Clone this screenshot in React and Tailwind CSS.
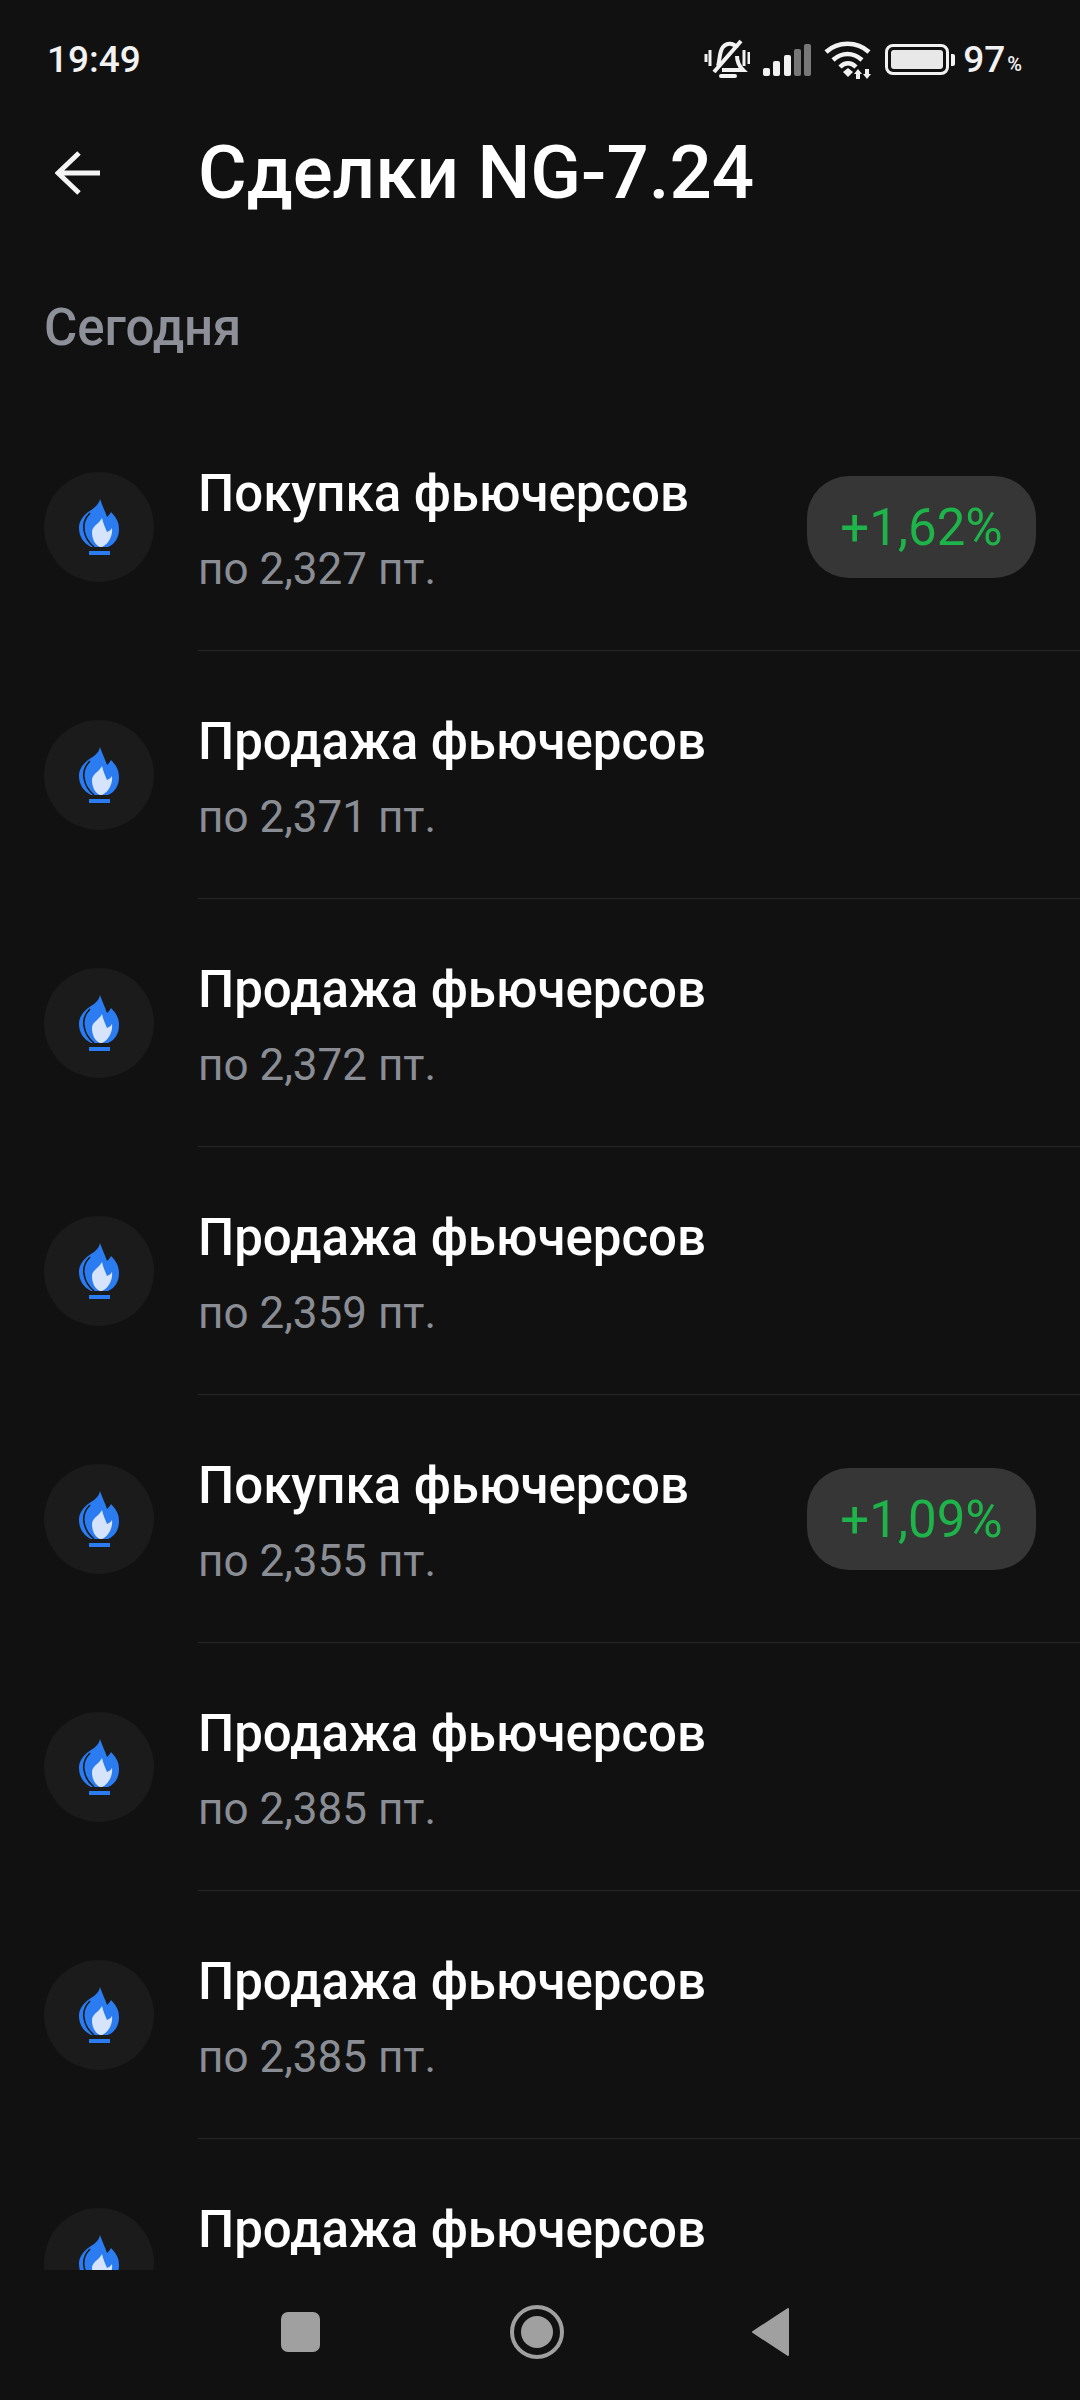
const trades = [
  { id: 1, title: "Покупка фьючерсов", price: "по 2,327 пт.", profit: "+1,62%" },
  { id: 2, title: "Продажа фьючерсов", price: "по 2,371 пт." },
  { id: 3, title: "Продажа фьючерсов", price: "по 2,372 пт." },
  { id: 4, title: "Продажа фьючерсов", price: "по 2,359 пт." },
  { id: 5, title: "Покупка фьючерсов", price: "по 2,355 пт.", profit: "+1,09%" },
  { id: 6, title: "Продажа фьючерсов", price: "по 2,385 пт." },
  { id: 7, title: "Продажа фьючерсов", price: "по 2,385 пт." },
  { id: 8, title: "Продажа фьючерсов", price: "по 2,385 пт." },
];

function GasIcon() {
  return (
    <svg width="110" height="110" viewBox="0 0 110 110">
      <path
        d="M56 27C58 33 61 39 63 45C65 43 66 42 67 40C72 45 75 50 75 57C75 66 71 72 64 75L47 75C39 71 35 64 35 56C35 49 39 44 44 40C49 37 55 33 56 27Z"
        fill="#2a7cf0"
      />
      <path d="M46 41C41 46 39 52 40 58C41 65 45 71 50 75" fill="none" stroke="#1b1b1c" strokeWidth="1.6" />
      <path
        d="M58 46C59 51 61 55 63 60C65 59 67 58 68 56C69 63 65 72 58 75L56 75C51 73 48 67 48 60C48 54 55 52 58 46Z"
        fill="#d6e4fb"
      />
      <path d="M45 79H66V83H45Z" fill="#2a7cf0" />
    </svg>
  );
}

function StatusIcons() {
  return (
    <div className="flex items-center">
      <svg width="46" height="44" viewBox="0 0 46 44" fill="none" stroke="#f2f2f2">
        <path d="M2 16V24M45 14V26M6 12V28M40 12V28" strokeWidth="3" />
        <path d="M14 28C16 22 15 14 19 9C23 4 30 5 33 10" strokeWidth="4" />
        <path d="M33 18C33 24 35 28 39 32H18" strokeWidth="4" />
        <path d="M10 34L37 3" strokeWidth="4" />
        <path d="M17 38H31" strokeWidth="4" strokeLinecap="round" />
      </svg>
      <svg className="ml-[13px]" width="49" height="32" viewBox="0 0 49 32">
        <rect x="0" y="24" width="7" height="8" rx="2" fill="#f2f2f2" />
        <rect x="10" y="17" width="7" height="15" rx="2" fill="#f2f2f2" />
        <rect x="21" y="11" width="7" height="21" rx="2" fill="#f2f2f2" />
        <rect x="31" y="5" width="7" height="27" rx="2" fill="#777777" />
        <rect x="41" y="0" width="7" height="32" rx="2" fill="#777777" />
      </svg>
      <svg className="ml-[12px]" width="48" height="38" viewBox="0 0 48 38" fill="none" stroke="#f2f2f2">
        <path d="M2 11C14 0 33 0 45 11" strokeWidth="4.5" />
        <path d="M9 19C18 11 29 11 38 19" strokeWidth="4.5" />
        <path d="M16 26C21 21 27 21 32 26" strokeWidth="4.5" />
        <path d="M19 31L24 27L29 31L24 36Z" fill="#f2f2f2" stroke="none" />
        <path d="M30 33L34 28L38 33H36V38H32V33Z" fill="#f2f2f2" stroke="none" />
        <path d="M39 33H41V28H45V33H47L43 38Z" fill="#f2f2f2" stroke="none" />
      </svg>
      <div className="ml-[13px] flex items-center">
        <div className="flex h-[31px] w-[64px] items-center rounded-[8px] border-[3px] border-[#f2f2f2] p-[3px]">
          <div className="h-full w-full rounded-[3px] bg-[#e8e8e8]" />
        </div>
        <div className="ml-[2px] h-[12px] w-[4px] rounded-r-[2px] bg-[#f2f2f2]" />
      </div>
      <span className="ml-[8px] text-[37px] leading-none font-medium text-[#f2f2f2]">97</span>
      <span className="ml-[2px] mt-[8px] text-[20px] leading-none font-medium text-[#f2f2f2]">%</span>
    </div>
  );
}

function TradeRow({ trade }) {
  return (
    <div className="flex h-[248px] shrink-0 pl-[44px]">
      <div className="flex h-full items-center">
        <div className="flex h-[110px] w-[110px] rounded-full bg-[#1b1b1c]">
          <GasIcon />
        </div>
      </div>
      <div className="ml-[44px] flex flex-1 items-center border-b border-[#262627] pr-[44px]">
        <div className="flex-1 pt-[8px]">
          <div className="text-[51px] leading-[64px] font-medium text-white">{trade.title}</div>
          <div className="mt-[13px] text-[44px] leading-[60px] text-[#8a8d94]">{trade.price}</div>
        </div>
        {trade.profit && (
          <div className="flex h-[102px] w-[229px] items-center justify-center rounded-[42px] bg-[#363636] pt-[4px] text-[51px] text-[#1eb44a]">
            {trade.profit}
          </div>
        )}
      </div>
    </div>
  );
}

export default function App() {
  return (
    <div className="flex h-[2400px] w-[1080px] flex-col overflow-hidden bg-[#111112] font-['Roboto',sans-serif]">
      <div className="flex h-[116px] shrink-0 items-center justify-between pt-[3px] pr-[58px] pl-[47px]">
        <span className="text-[37px] font-medium text-[#f2f2f2]">19:49</span>
        <StatusIcons />
      </div>
      <div className="flex h-[114px] shrink-0 items-center">
        <svg className="ml-[55px]" width="46" height="46" viewBox="0 0 46 46" fill="none" stroke="#f5f5f5" strokeWidth="5">
          <path d="M2 23H45M24 3L3 23L24 43" />
        </svg>
        <h1 className="ml-[97px] text-[74.5px] leading-none font-medium text-white">Сделки NG-7.24</h1>
      </div>
      <div className="mt-[68px] h-[105px] shrink-0 pl-[44px] text-[51px] leading-[60px] font-medium text-[#8d9098]">
        Сегодня
      </div>
      <div className="flex min-h-0 flex-1 flex-col overflow-hidden">
        {trades.map((trade) => (
          <TradeRow key={trade.id} trade={trade} />
        ))}
      </div>
      <div className="flex h-[130px] shrink-0 items-center pb-[6px]">
        <div className="ml-[281px] h-[40px] w-[39px] rounded-[7px] bg-[#a0a0a0]" />
        <div className="ml-[190px] flex h-[54px] w-[54px] items-center justify-center rounded-full border-[4px] border-[#a0a0a0]">
          <div className="h-[32px] w-[32px] rounded-full bg-[#a0a0a0]" />
        </div>
        <svg className="ml-[188px]" width="38" height="48" viewBox="0 0 38 48">
          <path d="M36 1V47L1 24Z" fill="#a0a0a0" stroke="#a0a0a0" strokeWidth="2" strokeLinejoin="round" />
        </svg>
      </div>
    </div>
  );
}
